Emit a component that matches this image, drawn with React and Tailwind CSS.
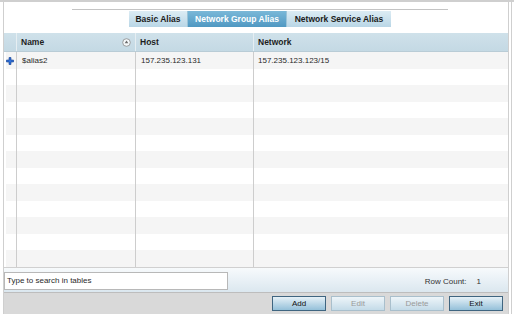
import React from 'react';

const rows = Array.from({ length: 13 }, (_, i) =>
  i === 0 ? { name: '$alias2', host: '157.235.123.131', network: '157.235.123.123/15' } : null
);

function PlusIcon() {
  return (
    <svg width="8" height="8" viewBox="0 0 8 8">
      <path d="M3 0.5h2v2.5h2.5v2h-2.5v2.5h-2v-2.5h-2.5v-2h2.5z" fill="#2f6fd8" stroke="#143f8f" strokeWidth="0.6" />
    </svg>
  );
}

function SortIcon() {
  return (
    <svg width="9" height="9" viewBox="0 0 9 9">
      <circle cx="4.5" cy="4.5" r="3.8" fill="#f4f8fa" stroke="#8a8a8a" strokeWidth="0.8" />
      <path d="M4.5 2.6l1.8 2.6h-3.6z" fill="#6b6b6b" />
    </svg>
  );
}

function Tab({ label, active, width }) {
  return (
    <div
      className={
        active
          ? 'h-[16px] flex items-center justify-center text-white bg-gradient-to-b from-[#7ab8d8] to-[#4f98c2] border-x border-[#9cc4d8]'
          : 'h-[16px] flex items-center justify-center text-[#1b1b1b] bg-gradient-to-b from-[#dcecf4] to-[#b9d6e6]'
      }
      style={{ width }}
    >
      <span className="text-[8.5px] font-bold">{label}</span>
    </div>
  );
}

function Button({ label, disabled }) {
  return (
    <button
      className={
        disabled
          ? 'w-[54px] h-[15px] border border-[#a9bfcc] bg-gradient-to-b from-[#eef5f9] to-[#c4dbe8] text-[#9a9a9a] text-[8px] leading-none'
          : 'w-[54px] h-[15px] border border-[#3f6580] bg-gradient-to-b from-[#e6f1f7] to-[#94c0d9] text-[#111] text-[8px] leading-none'
      }
    >
      {label}
    </button>
  );
}

export default function App() {
  return (
    <div className="w-[514px] h-[314px] bg-white flex font-['Liberation_Sans',Arial,sans-serif] overflow-hidden">
      <div className="w-[3px] shrink-0 border-t-2 border-[#d0d0d0]" />
      <div className="w-[506px] h-[314px] shrink-0 flex flex-col border-x border-t-2 border-[#cfcfcf]">
        {/* tabs */}
        <div className="h-[31px] pt-[7px] pl-[68px] shrink-0">
          <div className="w-[376px] border-t border-[#c4c4c4] pt-[1px] pl-[57px] flex">
            <Tab label="Basic Alias" width={58} />
            <Tab label="Network Group Alias" active width={100} />
            <Tab label="Network Service Alias" width={104} />
          </div>
        </div>

        {/* table */}
        <div className="h-[235px] shrink-0 border-b border-[#d0d0d0] flex flex-col">
          <div className="h-[19px] grid grid-cols-[12px_119px_118px_1fr] bg-gradient-to-b from-[#cfe1ea] to-[#c4d9e4] border-b border-[#b9ccd6] text-[8.5px] font-bold text-[#1e1e1e]">
            <div />
            <div className="border-l border-[#e6eef2] flex items-center justify-between pl-[4px] pr-[4px]">
              <span>Name</span>
              <SortIcon />
            </div>
            <div className="border-l border-[#e6eef2] flex items-center pl-[4px]">Host</div>
            <div className="border-l border-[#e6eef2] flex items-center pl-[4px]">Network</div>
          </div>
          {rows.map((r, i) => (
            <div
              key={i}
              className={
                i % 2 === 0
                  ? 'h-[17px] grid grid-cols-[12px_119px_118px_1fr] bg-[#f5f5f5] text-[8px] text-[#2a2a2a]'
                  : 'h-[16px] grid grid-cols-[12px_119px_118px_1fr] bg-white text-[8px] text-[#2a2a2a]'
              }
            >
              <div className="flex items-center pl-[2px] bg-white">
                <div className={i % 2 === 0 ? 'w-full h-full bg-[#f5f5f5] flex items-center' : 'w-full h-full flex items-center'}>
                  {r && <PlusIcon />}
                </div>
              </div>
              <div className="border-l border-[#cdcdcd] flex items-center pl-[5px]">{r ? r.name : ''}</div>
              <div className="border-l border-[#cdcdcd] flex items-center pl-[5px]">{r ? r.host : ''}</div>
              <div className="border-l border-[#cdcdcd] flex items-center pl-[4px]">{r ? r.network : ''}</div>
            </div>
          ))}
        </div>

        {/* search */}
        <div className="h-[24px] shrink-0 bg-gradient-to-b from-[#f7fafc] to-[#dbe7ef] flex items-start justify-between pt-[4px] pr-[27px]">
          <div className="w-[224px] h-[18px] bg-white border border-[#b8b8b8] flex items-center pl-[2px] text-[8px] text-[#2a2a2a]">
            Type to search in tables
          </div>
          <div className="flex items-center gap-[10px] pt-[4px] text-[8px] text-[#333]">
            <span>Row Count:</span>
            <span>1</span>
          </div>
        </div>

        {/* buttons */}
        <div className="flex-1 bg-[#d9d9d9] border-t border-[#bdbdbd] flex items-start justify-end gap-[5px] pt-[3px] pr-[5px]">
          <Button label="Add" />
          <Button label="Edit" disabled />
          <Button label="Delete" disabled />
          <Button label="Exit" />
        </div>
      </div>
      <div className="w-[2px] shrink-0 border-t-2 border-[#d0d0d0]" />
      <div className="w-[1px] shrink-0 bg-[#cfcfcf]" />
      <div className="flex-1 border-t-2 border-[#d0d0d0]" />
    </div>
  );
}
